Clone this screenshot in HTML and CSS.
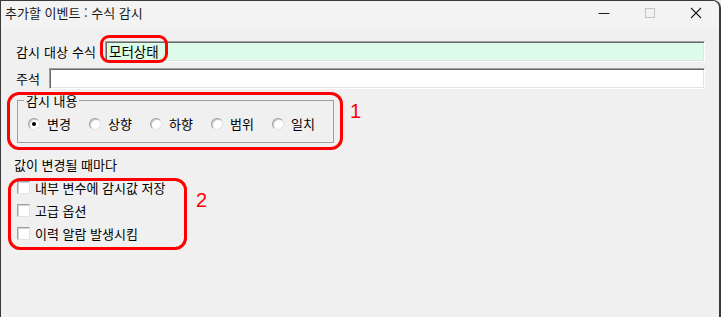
FILE: index.html
```html
<!DOCTYPE html>
<html lang="ko">
<head>
<meta charset="utf-8">
<title>추가할 이벤트 : 수식 감시</title>
<link rel="stylesheet" href="styles.css">
</head>
<body>
<div class="window">
  <div class="titlebar">
    <span class="title">추가할 이벤트 : 수식 감시</span>
    <div class="controls">
      <span class="btn"><svg width="12" height="12" viewBox="0 0 12 12"><line x1="0.5" y1="6.5" x2="11.5" y2="6.5" stroke="#1a1a1a" stroke-width="1"/></svg></span>
      <span class="btn"><svg width="12" height="12" viewBox="0 0 12 12"><rect x="1.5" y="1.5" width="9" height="9" fill="none" stroke="#c4c4c4" stroke-width="1"/></svg></span>
      <span class="btn"><svg width="12" height="12" viewBox="0 0 12 12"><path d="M1 1 L11 11 M11 1 L1 11" stroke="#1a1a1a" stroke-width="1.1" fill="none"/></svg></span>
    </div>
  </div>
  <div class="content">
    <div class="row row-first">
      <span class="lbl lbl-wide">감시 대상 수식</span>
      <div class="input input-green">모터상태</div>
    </div>
    <div class="row row-second">
      <span class="lbl lbl-short">주석</span>
      <div class="input"></div>
    </div>
    <fieldset class="group">
      <legend>감시 내용</legend>
      <div class="radios">
        <span class="radio-item"><span class="radio checked"></span><span class="rtext">변경</span></span>
        <span class="radio-item"><span class="radio"></span><span class="rtext">상향</span></span>
        <span class="radio-item"><span class="radio"></span><span class="rtext">하향</span></span>
        <span class="radio-item"><span class="radio"></span><span class="rtext">범위</span></span>
        <span class="radio-item"><span class="radio"></span><span class="rtext">일치</span></span>
      </div>
    </fieldset>
    <div class="section">값이 변경될 때마다</div>
    <div class="checks">
      <div class="check-row"><span class="checkbox"></span><span class="ctext">내부 변수에 감시값 저장</span></div>
      <div class="check-row"><span class="checkbox"></span><span class="ctext">고급 옵션</span></div>
      <div class="check-row"><span class="checkbox"></span><span class="ctext">이력 알람 발생시킴</span></div>
    </div>
  </div>
  <div class="mark mark-a"></div>
  <div class="mark mark-1"></div>
  <div class="mark mark-2"></div>
  <span class="num num-1">1</span>
  <span class="num num-2">2</span>
</div>
</body>
</html>
```
FILE: styles.css
```css
html, body {
  margin: 0;
  padding: 0;
  background: #f0f0f0;
}
body {
  width: 721px;
  height: 317px;
  overflow: hidden;
  font-family: "Noto Sans CJK KR", "Noto Sans", sans-serif;
  font-size: 13px;
  color: #000;
}
.window {
  position: relative;
  box-sizing: border-box;
  width: 721px;
  height: 317px;
  border-left: 1px solid #3a3a3a;
  border-right: 2px solid #3a3a3a;
  border-top: 1px solid #3a3a3a;
  border-top-right-radius: 8px;
  background: #f0f0f0;
}
.titlebar {
  height: 28px;
  display: flex;
  align-items: flex-start;
  background: #f3f3f3;
  border-top-right-radius: 7px;
}
.title {
  flex: 1;
  padding-left: 4px;
  line-height: 24px;
  font-size: 13px;
  color: #1a1a1a;
}
.controls {
  display: flex;
}
.btn {
  width: 46px;
  height: 24px;
  display: flex;
  align-items: center;
  justify-content: center;
}
.content {
  padding: 0 14px 0 15px;
}
.row {
  display: flex;
  align-items: center;
}
.row-first {
  margin-top: 12px;
}
.row-second {
  margin-top: 6px;
}
.lbl {
  flex: none;
  line-height: 14px;
}
.lbl-wide {
  width: 89px;
  word-spacing: 0.5px;
}
.lbl-short {
  width: 33px;
}
.input {
  flex: 1;
  box-sizing: border-box;
  height: 21px;
  background: #fff;
  border-top: 1px solid #a0a0a0;
  border-left: 1px solid #a0a0a0;
  border-right: 1px solid #fff;
  border-bottom: 1px solid #fff;
  box-shadow: inset 1px 1px 0 #696969, inset -1px -1px 0 #e3e3e3;
  padding: 0 3px;
  line-height: 18px;
  font-size: 13.5px;
}
.input-green {
  background: #dcfce9;
}
.group {
  box-sizing: border-box;
  width: 315px;
  margin: 4px 0 0 1px;
  padding: 0 0 11px 10px;
  border: 1px solid #a0a0a0;
}
.group legend {
  margin-left: -4px;
  padding: 0 2px;
  line-height: 15px;
  font-size: 13px;
}
.radios {
  display: flex;
  margin-top: 9px;
  line-height: 14px;
}
.radio-item {
  width: 61px;
  display: flex;
  align-items: center;
}
.radio {
  position: relative;
  box-sizing: border-box;
  width: 12px;
  height: 12px;
  border-radius: 50%;
  background: #fff;
  border: 1px solid;
  border-color: #a0a0a0 #e3e3e3 #e3e3e3 #a0a0a0;
  box-shadow: inset 1px 1px 0 #c8c8c8;
}
.radio.checked::after {
  content: "";
  position: absolute;
  left: 3px;
  top: 3px;
  width: 4px;
  height: 4px;
  border-radius: 50%;
  background: #000;
}
.rtext {
  margin-left: 7px;
}
.section {
  margin: 15px 0 0 -2px;
  line-height: 14px;
}
.checks {
  margin-top: 4px;
}
.check-row {
  height: 23px;
  display: flex;
  align-items: center;
}
.checkbox {
  box-sizing: border-box;
  width: 13px;
  height: 13px;
  margin-left: 1px;
  background: #fff;
  border-top: 1px solid #a0a0a0;
  border-left: 1px solid #a0a0a0;
  border-right: 1px solid #e3e3e3;
  border-bottom: 1px solid #e3e3e3;
  box-shadow: inset 1px 1px 0 #d4d4d4;
}
.ctext {
  margin-left: 5px;
  line-height: 14px;
}
.mark {
  position: absolute;
  box-sizing: border-box;
  border: 3px solid #ff0000;
}
.mark-a {
  left: 99px;
  top: 34px;
  width: 68px;
  height: 28px;
  border-radius: 9px;
}
.mark-1 {
  left: 6px;
  top: 91px;
  width: 336px;
  height: 58px;
  border-radius: 12px;
}
.mark-2 {
  left: 7px;
  top: 177px;
  width: 179px;
  height: 72px;
  border-radius: 12px;
}
.num {
  position: absolute;
  font-family: "Liberation Sans", Arial, sans-serif;
  font-size: 20px;
  line-height: 20px;
  color: #ff0000;
}
.num-1 {
  left: 349px;
  top: 100px;
}
.num-2 {
  left: 195px;
  top: 189px;
}
```
